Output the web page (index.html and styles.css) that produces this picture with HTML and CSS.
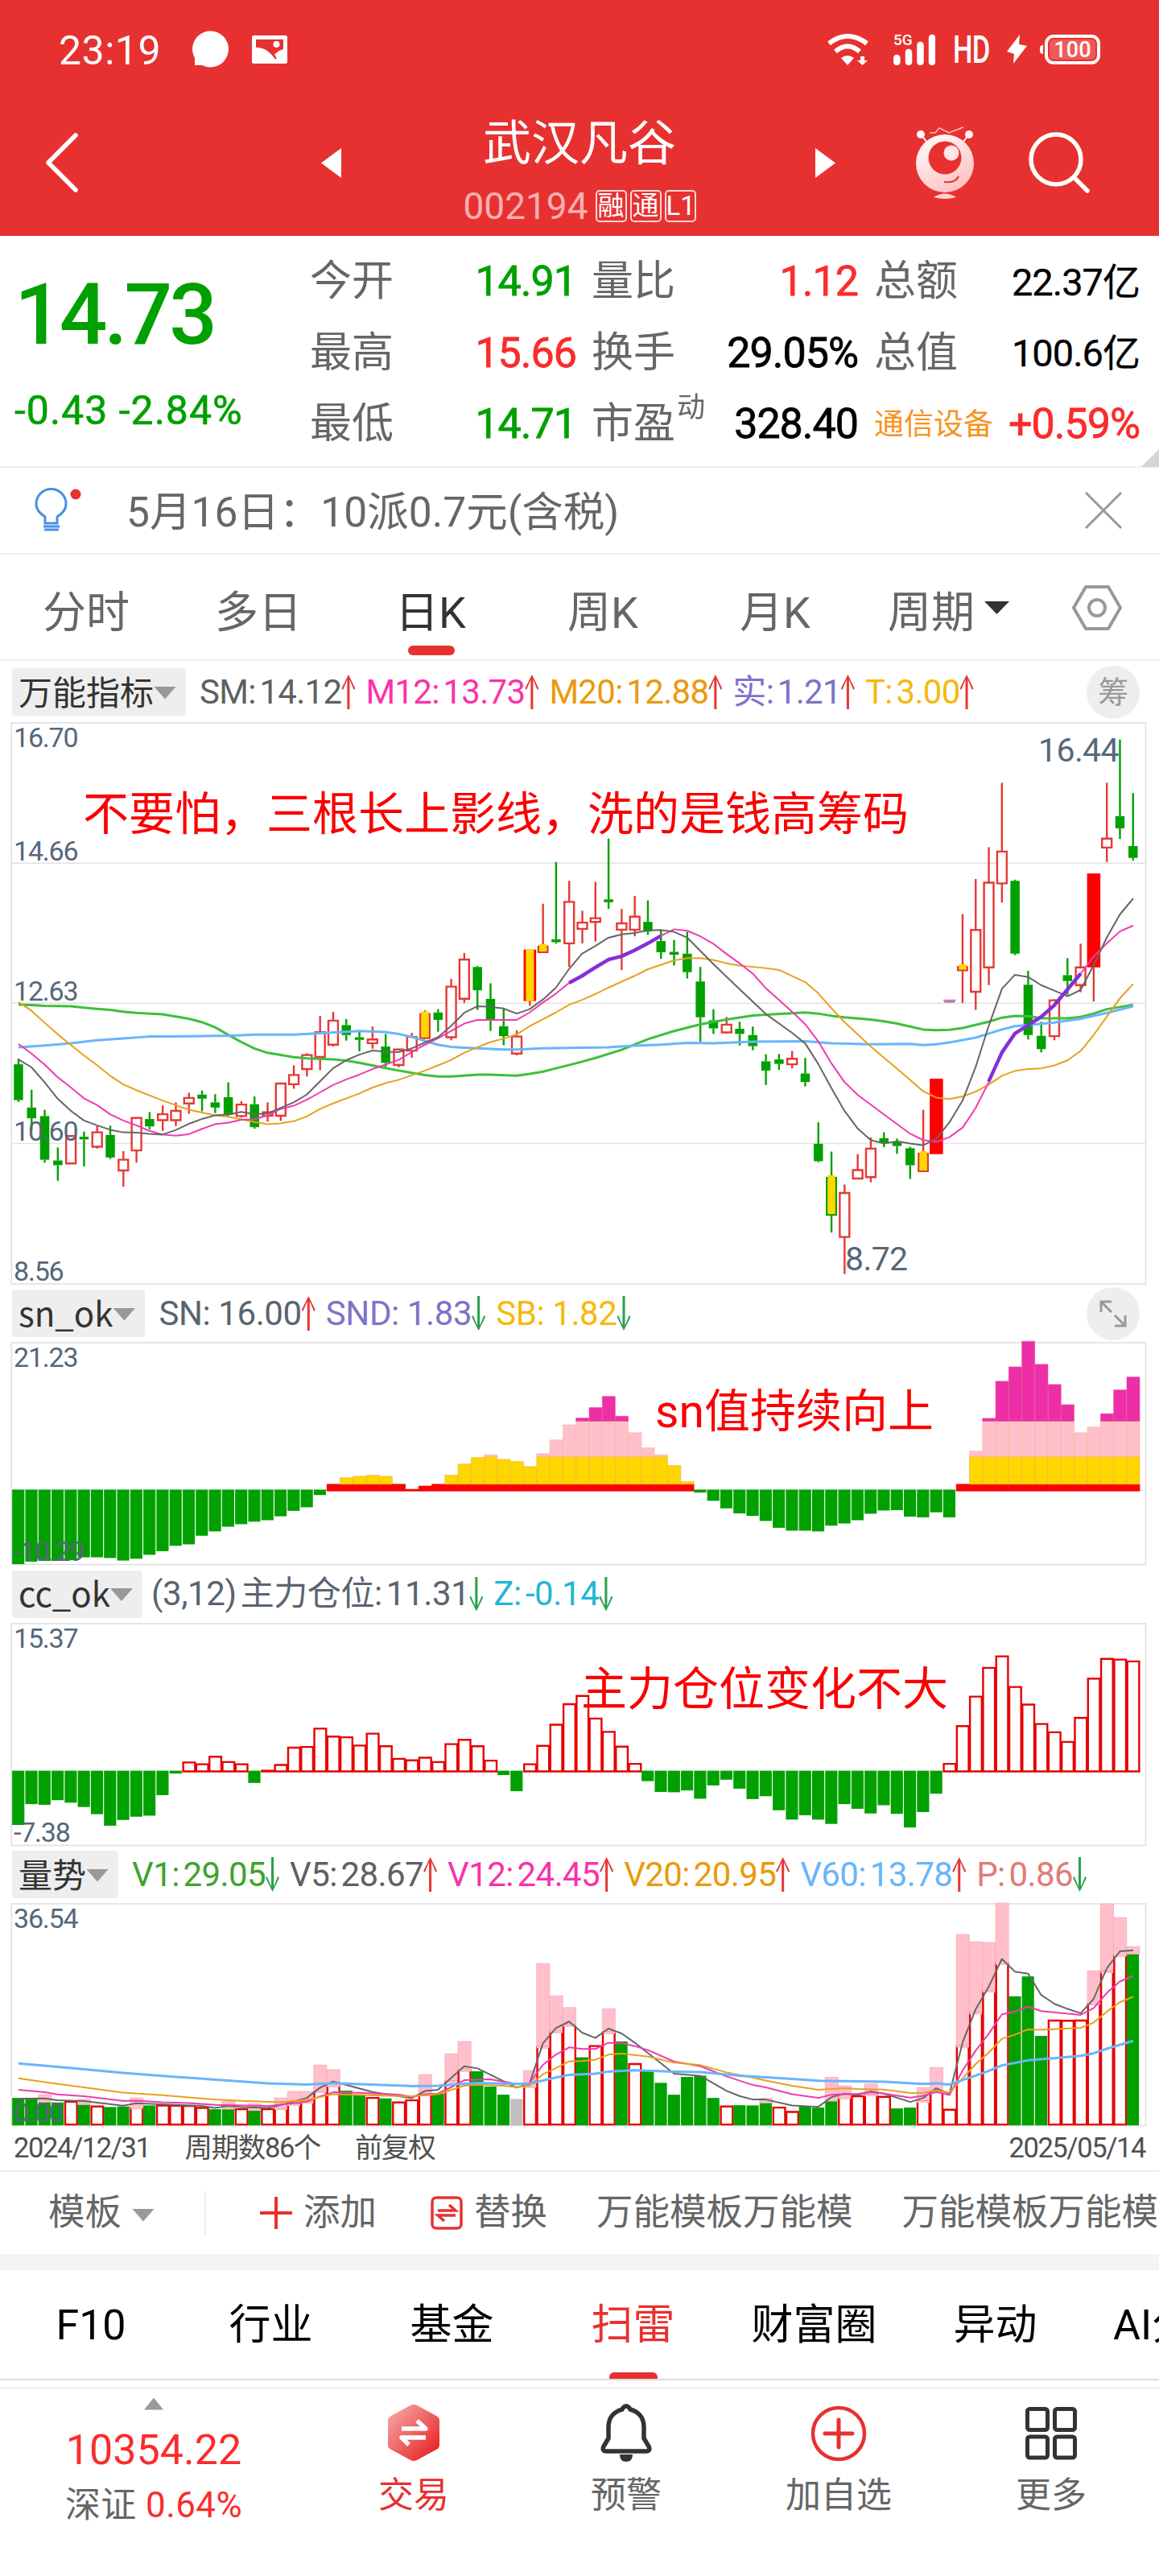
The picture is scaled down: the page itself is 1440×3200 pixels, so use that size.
FILE: index.html
```html
<!DOCTYPE html>
<html lang="zh-CN">
<head>
  <meta charset="UTF-8">
  <meta name="viewport" content="width=device-width,initial-scale=1.0">
  <title>武汉凡谷 002194</title>
  <link rel="stylesheet" href="styles.css">
</head>
<body>

  <!-- 顶部状态栏 -->
  <div class="status">
    <span class="time">23:19</span>
    <svg class="s-chat" viewBox="0 0 45 47"><circle cx="22.500" cy="23" r="22.500" fill="#fff"/><path d="M3 28v15h14z" fill="#fff"/></svg>
    <svg class="s-pic" viewBox="0 0 44 35"><rect width="44" height="35" rx="2.500" fill="#fff"/><path d="M5 5h34v12l-6 2.500-5 4 3 5-2 1C23 21 16 15 5 15z" fill="#e73131"/><circle cx="30.500" cy="11" r="4" fill="#fff"/></svg>
    <div class="status-right">
      <svg class="s-wifi" viewBox="0 0 51 39"><g fill="none" stroke="#fff" stroke-width="6"><path d="M2 12Q25 -6 49 12"/><path d="M10 22Q25 9 40 22"/></g><path d="M17 30q8-6 16 0l-8 9z" fill="#fff"/><path d="M41 28h5v5h4l-6.500 6-6.500-6h4z" fill="#fff"/></svg>
      <div class="signal">
        <span>5G</span>
        <svg viewBox="0 0 52 39"><g stroke="#fff" stroke-width="8.500" stroke-linecap="round"><path d="M4.300 30v5M19 23v12M33.500 14v21M48 5v30"/></g></svg>
      </div>
      <span class="hd">HD</span>
      <svg class="s-bolt" viewBox="0 0 25 36"><path d="M16 0L0 21l9 3-1 12 17-22-10-2z" fill="#fff"/></svg>
      <div class="battery"><span>100</span></div>
    </div>
  </div>

  <div class="header">
    <svg class="back" viewBox="0 0 40 74"><path d="M37 3L3 37l34 34" fill="none" stroke="#fff" stroke-width="5.500" stroke-linecap="round" stroke-linejoin="round"/></svg>
    <svg class="prev" viewBox="0 0 25 37"><path d="M25 0v37L0 18.500z" fill="#fff"/></svg>
    <div class="name">
      <h1>武汉凡谷</h1>
      <p><span class="code">002194</span><i>融</i><i>通</i><i>L1</i></p>
    </div>
    <svg class="next" viewBox="0 0 25 37"><path d="M0 0v37l25-18.500z" fill="#fff"/></svg>
    <svg class="robot" viewBox="0 0 72 90">
      <defs><linearGradient id="rg" x1="0" y1="0" x2=".6" y2="1"><stop offset="0" stop-color="#fff"/><stop offset="1" stop-color="#ffc2c4"/></linearGradient></defs>
      <path d="M6 10l8 10M66 10l-8 10" stroke="#fff" stroke-width="2"/>
      <path d="M17 8h7l5-6 12 6 18-7" fill="none" stroke="#ffc2c4" stroke-width="1.500"/>
      <circle cx="6" cy="10" r="5" fill="#fff"/><circle cx="66" cy="10" r="5" fill="#fff0f0"/>
      <circle cx="36" cy="46" r="36" fill="url(#rg)"/>
      <circle cx="36" cy="39" r="20.500" fill="#e73131"/>
      <circle cx="44" cy="33" r="9.500" fill="#ffe5e5"/>
      <path d="M35 69q14 2 18-7" fill="none" stroke="#e73131" stroke-width="2"/>
      <path d="M22 88q14-9 28 0-14 4-28 0z" fill="#ffd2d4"/>
    </svg>
    <svg class="search" viewBox="0 0 76 76"><circle cx="34" cy="34" r="31" fill="none" stroke="#fff" stroke-width="5.500"/><path d="M57 57l16 16" stroke="#fff" stroke-width="5.500" stroke-linecap="round"/></svg>
  </div>

  <!-- 报价 -->
  <div class="quote">
    <div class="price down">
      <strong>14.73</strong>
      <span>-0.43 -2.84%</span>
    </div>
    <dl class="col col1">
      <div><dt>今开</dt><dd class="down">14.91</dd></div>
      <div><dt>最高</dt><dd class="up">15.66</dd></div>
      <div><dt>最低</dt><dd class="down">14.71</dd></div>
    </dl>
    <dl class="col col2">
      <div><dt>量比</dt><dd class="up">1.12</dd></div>
      <div><dt>换手</dt><dd>29.05%</dd></div>
      <div><dt>市盈<sup>动</sup></dt><dd>328.40</dd></div>
    </dl>
    <dl class="col col3">
      <div><dt>总额</dt><dd class="unit">22.37亿</dd></div>
      <div><dt>总值</dt><dd class="unit">100.6亿</dd></div>
      <div><dt class="sector">通信设备</dt><dd class="up">+0.59%</dd></div>
    </dl>
  </div>

  <div class="notice">
    <svg class="bulb" viewBox="0 0 60 56"><path d="M13 45v-8C6 32 2 28 2 21a18 18 0 0 1 37 0c0 7-4 11-11 16v8zM11 49h20M12 53h18" fill="none" stroke="#4a90e2" stroke-width="3"/><circle cx="51" cy="9" r="6.500" fill="#e73131"/></svg>
    <span>5月16日：10派0.7元(含税)</span>
    <svg class="close" viewBox="0 0 46 46"><path d="M1 1l44 44M45 1L1 45" stroke="#999" stroke-width="3"/></svg>
  </div>

  <div class="periods">
    <span>分时</span><span>多日</span><span class="on">日K</span><span>周K</span><span>月K</span>
    <span class="more">周期<svg viewBox="0 0 31 16"><path d="M0 0h31L15.500 16z" fill="#333"/></svg></span>
    <svg class="setting" viewBox="0 0 62 56"><path d="M17 2h28l15 26-15 26H17L2 28z" fill="none" stroke="#999" stroke-width="4" stroke-linejoin="round"/><circle cx="31" cy="28" r="10" fill="none" stroke="#999" stroke-width="4"/></svg>
  </div>

  <!-- 主图 -->
  <div class="legend main-legend">
    <div class="tag">万能指标<b></b></div>
    <span class="c-grey a-up">SM: 14.12</span>
    <span class="c-pink a-up">M12: 13.73</span>
    <span class="c-gold a-up">M20: 12.88</span>
    <span class="c-purple a-up">实: 1.21</span>
    <span class="c-yellow a-up">T: 3.00</span>
    <div class="round">筹</div>
  </div>
  <div class="chart k-chart">
    <svg id="k" viewBox="0 40 3136 1517" preserveAspectRatio="none"></svg>
    <span class="axis t0">16.70</span>
    <span class="axis t1">14.66</span>
    <span class="axis t2">12.63</span>
    <span class="axis t3">10.60</span>
    <span class="axis t4">8.56</span>
    <span class="mark high">16.44</span>
    <span class="mark low">8.72</span>
    <span class="note note1">不要怕，三根长上影线，洗的是钱高筹码</span>
  </div>

  <div class="legend sn-legend">
    <div class="tag">sn_ok<b></b></div>
    <span class="c-slate a-up">SN: 16.00</span>
    <span class="c-purple a-down">SND: 1.83</span>
    <span class="c-yellow a-down">SB: 1.82</span>
    <div class="round"><svg viewBox="0 0 34 34"><path d="M2 15V2h13M2 2l13 13M32 19v13H19M32 32L19 19" fill="none" stroke="#999" stroke-width="3"/></svg></div>
  </div>
  <div class="chart sub-chart">
    <svg id="sn" viewBox="0 176 3136 616" preserveAspectRatio="none"></svg>
    <span class="axis top">21.23</span>
    <span class="axis foot">-10.29</span>
    <span class="note note2">sn值持续向上</span>
  </div>

  <div class="legend cc-legend">
    <div class="tag">cc_ok<b></b></div>
    <span class="c-slate a-down">(3,12) 主力仓位: 11.31</span>
    <span class="c-cyan a-down">Z: -0.14</span>
  </div>
  <div class="chart sub-chart">
    <svg id="cc" viewBox="0 957 3136 617" preserveAspectRatio="none"></svg>
    <span class="axis top">15.37</span>
    <span class="axis foot">-7.38</span>
    <span class="note note3">主力仓位变化不大</span>
  </div>

  <div class="legend vol-legend">
    <div class="tag">量势<b></b></div>
    <span class="c-green a-down">V1: 29.05</span>
    <span class="c-grey a-up">V5: 28.67</span>
    <span class="c-pink a-up">V12: 24.45</span>
    <span class="c-gold a-up">V20: 20.95</span>
    <span class="c-blue a-up">V60: 13.78</span>
    <span class="c-rose a-down">P: 0.86</span>
  </div>
  <div class="chart sub-chart">
    <svg id="vol" viewBox="0 226 3136 825" preserveAspectRatio="none"></svg>
    <span class="axis top">36.54</span>
    <span class="axis foot">0.00</span>
  </div>
  <div class="dates"><span>2024/12/31</span><span>周期数86个</span><span>前复权</span><span class="end">2025/05/14</span></div>

  <div class="tools">
    <span class="tpl">模板<b></b></span>
    <span class="add"><svg viewBox="0 0 40 40"><path d="M20 0v40M0 20h40" stroke="#e73131" stroke-width="4"/></svg>添加</span>
    <span class="swap"><svg viewBox="0 0 40 42"><rect x="2" y="2" width="36" height="38" rx="5" fill="none" stroke="#e73131" stroke-width="3.500"/><path d="M9 18h22l-8-7M31 24H9l8 7" fill="none" stroke="#e73131" stroke-width="3.500"/></svg>替换</span>
    <span class="long">万能模板万能模</span>
    <span class="long">万能模板万能模</span>
  </div>

  <div class="tabs">
    <span>F10</span><span>行业</span><span>基金</span><span class="on">扫雷</span><span>财富圈</span><span>异动</span><span>AI分析</span>
  </div>

  <div class="bottom">
    <div class="index">
      <i></i>
      <strong>10354.22</strong>
      <p>深证 <em>0.64%</em></p>
    </div>
    <div class="item red">
      <svg viewBox="0 0 72 72">
        <defs><linearGradient id="hg" x1="0" y1="0" x2="1" y2="1"><stop offset=".1" stop-color="#f5a0a0"/><stop offset=".9" stop-color="#e82525"/></linearGradient></defs>
        <path d="M32 2q4-2 8 0l24 13q4 2 4 6v30q0 4-4 6L40 70q-4 2-8 0L8 57q-4-2-4-6V21q0-4 4-6z" fill="url(#hg)"/>
        <path d="M21 31h30L40 21M51 42H21l9 9" fill="none" stroke="#fff" stroke-width="5.500" stroke-linejoin="round"/>
      </svg>
      <span>交易</span>
    </div>
    <div class="item">
      <svg viewBox="0 0 72 72"><path d="M36 3c3 0 4 2 5 4 11 3 17 11 17 22v14l6 10c2 4 0 6-3 6H11c-3 0-5-2-3-6l6-10V29C14 18 20 10 31 7c1-2 2-4 5-4z" fill="none" stroke="#333" stroke-width="5.500" stroke-linejoin="round"/><path d="M28 63h16q0 9-8 9t-8-9z" fill="#333"/></svg>
      <span>预警</span>
    </div>
    <div class="item">
      <svg viewBox="0 0 72 72"><circle cx="36" cy="37" r="32" fill="none" stroke="#e73131" stroke-width="4.500"/><path d="M36 20v34M19 37h34" stroke="#e73131" stroke-width="5" stroke-linecap="round"/></svg>
      <span>加自选</span>
    </div>
    <div class="item">
      <svg viewBox="0 0 72 72"><g fill="none" stroke="#333" stroke-width="5"><rect x="6.500" y="6.500" width="25" height="26" rx="3"/><rect x="40.500" y="6.500" width="25" height="26" rx="3"/><rect x="6.500" y="41" width="25" height="26" rx="3"/><rect x="40.500" y="41" width="25" height="26" rx="3"/></g></svg>
      <span>更多</span>
    </div>
  </div>

  <script src="chart.js"></script>
</body>
</html>
```
FILE: styles.css
```css
* {
  box-sizing: border-box;
  margin: 0;
  padding: 0;
}

body {
  width: 1440px;
  height: 3200px;
  overflow: hidden;
  background: #fff;
  color: #666;
  font-family: Roboto, "Noto Sans CJK SC", sans-serif;
  line-height: 1;
}

svg {
  display: block;
  flex-shrink: 0;
}

i, em {
  font-style: normal;
}

.up { color: #fa2c2c; }
.down { color: #00a000; }

/* ===== 状态栏 ===== */
.status {
  display: flex;
  align-items: center;
  height: 122px;
  padding: 0 73px 0 73px;
  background: #e73131;
  color: #fff;
}

.time {
  width: 166px;
  padding-top: 4px;
  font-size: 50px;
  letter-spacing: 0.5px;
}

.s-chat { width: 45px; height: 47px; }
.s-pic { width: 44px; height: 35px; margin-left: 29px; }
.s-wifi { width: 51px; height: 39px; }
.s-bolt { width: 25px; height: 36px; }

.status-right {
  display: flex;
  align-items: center;
  margin-left: auto;
}

.signal {
  position: relative;
  margin: 0 22px 0 31px;
}

.signal svg {
  width: 52px;
  height: 39px;
}

.signal span {
  position: absolute;
  left: 0;
  top: -2px;
  font-size: 19px;
  font-weight: 500;
}

.hd {
  width: 67px;
  padding-top: 2px;
  font-size: 48px;
  font-weight: 500;
  letter-spacing: -1px;
  transform: scaleX(.72);
  transform-origin: left;
}

.battery {
  position: relative;
  width: 69px;
  height: 37px;
  margin-left: 22px;
  padding: 2px;
  border: 4px solid #fff;
  border-radius: 11px;
}

.battery::before {
  content: "";
  position: absolute;
  left: -10px;
  top: 9px;
  width: 4px;
  height: 11px;
  border-radius: 4px 0 0 4px;
  background: #fff;
}

.battery span {
  display: block;
  height: 25px;
  border-radius: 5px;
  background: #ee5a5a;
  font-size: 27px;
  font-weight: 500;
  line-height: 26px;
  text-align: center;
}

/* ===== 标题 ===== */
.header {
  display: flex;
  align-items: center;
  height: 171px;
  padding: 0 86px 11px 57px;
  background: #e73131;
  color: #fff;
}

.back { width: 40px; height: 74px; }
.prev { width: 25px; height: 37px; margin-left: 302px; }
.next { width: 25px; height: 37px; }
.robot { width: 72px; height: 90px; margin-left: 100px; }
.search { width: 76px; height: 76px; margin-left: 68px; }

.name {
  width: 589px;
  padding-left: 3px;
  text-align: center;
}

.name h1 {
  margin-top: 24px;
  font-size: 60px;
  font-weight: 400;
}

.name p {
  display: flex;
  justify-content: center;
  align-items: center;
  gap: 4px;
  margin-top: 24px;
}

.code {
  margin-right: 5px;
  font-size: 46px;
  opacity: .62;
}

.name i {
  width: 39px;
  height: 40px;
  border: 2px solid #fbd6d6;
  border-radius: 5px;
  font-size: 33px;
  line-height: 36px;
}

/* ===== 报价 ===== */
.quote {
  position: relative;
  display: flex;
  height: 288px;
  padding-top: 13px;
  border-bottom: 2px solid #eee;
}

.quote::after {
  content: "";
  position: absolute;
  right: 0;
  bottom: -1px;
  border: solid transparent;
  border-width: 0 0 22px 22px;
  border-bottom-color: #d5d5d5;
}

.price {
  width: 385px;
  padding: 33px 0 0 18px;
}

.price strong {
  display: block;
  font-size: 105px;
  font-weight: 500;
  letter-spacing: -4px;
}

.price span {
  display: block;
  margin-top: 41px;
  font-size: 50px;
  font-weight: 400;
  -webkit-text-stroke: .6px currentColor;
  letter-spacing: 1px;
  white-space: nowrap;
}

.col1 { width: 331px; }
.col2 { width: 331px; margin-left: 19px; }
.col3 { width: 330px; margin-left: 20px; }

.col > div {
  display: flex;
  justify-content: space-between;
  align-items: center;
  height: 88.500px;
}

.col dt {
  position: relative;
  font-size: 52px;
}

.col dt sup {
  position: absolute;
  right: -37px;
  top: -12px;
  font-size: 35px;
}

.col dt.sector {
  font-size: 37px;
  color: #f7931e;
}

.col dd {
  font-size: 52px;
  font-weight: 400;
  -webkit-text-stroke: .8px currentColor;
  letter-spacing: -1px;
  color: #000;
}

.col dd.up { color: #fa2c2c; }
.col dd.down { color: #00a000; }

.col dd.unit {
  font-size: 47px;
  -webkit-text-stroke-width: .3px;
}

/* ===== 公告 ===== */
.notice {
  display: flex;
  align-items: center;
  height: 108px;
  padding: 0 46px 0 43px;
  border-bottom: 2px solid #eee;
  font-size: 51.500px;
}

.bulb { width: 60px; height: 56px; margin: 0 54px 3px 0; }
.notice span { padding-top: 5px; }
.close { width: 46px; height: 46px; margin: 0 0 0 auto; }

/* ===== 周期 ===== */
.periods {
  display: flex;
  height: 132px;
  border-bottom: 2px solid #eee;
  font-size: 54px;
}

.periods span {
  position: relative;
  width: 214px;
  padding-top: 46px;
  text-align: center;
}

.periods .on { color: #333; }

.periods .on::after {
  content: "";
  position: absolute;
  left: 79px;
  bottom: 5px;
  width: 58px;
  height: 12px;
  border-radius: 6px;
  background: #e73131;
}

.periods .more {
  display: flex;
  gap: 12px;
  width: 262px;
  padding-left: 33px;
}

.more svg {
  width: 31px;
  height: 16px;
  margin-top: 12px;
}

.setting {
  width: 62px;
  height: 56px;
  margin-top: 38px;
}

/* ===== 指标栏 ===== */
.legend {
  display: flex;
  align-items: center;
  height: 73px;
  padding: 0 24px 0 15px;
  font-size: 42px;
  letter-spacing: -.4px;
  word-spacing: -5px;
}

.main-legend {
  height: 77px;
  letter-spacing: -.7px;
}

.sn-legend { word-spacing: 0; }
.vol-legend { letter-spacing: -.6px; }

.tag {
  display: flex;
  align-items: center;
  height: 59px;
  margin-right: 17px;
  padding: 0 12px 4px 8px;
  border-radius: 4px;
  background: #eee;
  color: #333;
  font-family: "Noto Sans CJK SC", sans-serif;
  letter-spacing: 0;
}

.cc-legend .tag { margin-right: 11px; }

.tag b, .tpl b {
  width: 28px;
  height: 16px;
  margin-top: 6px;
  background: #999;
  clip-path: polygon(0 0, 100% 0, 50% 100%);
}

.legend span {
  display: flex;
  align-items: center;
  margin-right: 13px;
  white-space: nowrap;
}

/* 涨跌箭头 */
.legend span::after {
  content: "";
  width: 17px;
  height: 43px;
  background: currentColor;
}

.legend .a-up::after {
  background: #e53935;
  clip-path: polygon(50% 0, 100% 40%, 90% 44%, 59% 15%, 59% 100%, 41% 100%, 41% 15%, 10% 44%, 0 40%);
}

.legend .a-down::after {
  background: #2ba04c;
  clip-path: polygon(50% 100%, 100% 60%, 90% 56%, 59% 85%, 59% 0, 41% 0, 41% 85%, 10% 56%, 0 60%);
}

.c-grey { color: #606060; }
.c-slate { color: #596470; }
.c-pink { color: #fa32a8; }
.c-gold { color: #e99a0c; }
.c-purple { color: #7d73c9; }
.c-yellow { color: #f6b90e; }
.c-cyan { color: #1fb7d6; }
.c-green { color: #3fa32b; }
.c-blue { color: #69b5fb; }
.c-rose { color: #e07b78; }

.round {
  display: flex;
  justify-content: center;
  align-items: center;
  width: 66px;
  height: 66px;
  margin-left: auto;
  border-radius: 50%;
  background: #eee;
  color: #999;
  font-size: 38px;
}

.round svg { width: 34px; height: 34px; }

/* ===== 图表 ===== */
.chart {
  position: relative;
  width: 1440px;
}

.chart svg {
  width: 100%;
  height: 100%;
  overflow: visible;
}

.k-chart { height: 697px; }
.sub-chart { height: 275.500px; }

.axis, .mark, .note {
  position: absolute;
  transform: translateY(-50%);
  white-space: nowrap;
}

.axis {
  left: 17px;
  color: #54687a;
  font-size: 34px;
  letter-spacing: -1.2px;
}

.t0, .top { top: 18px; }
.t1 { top: 159px; }
.t2 { top: 333px; }
.t3 { top: 507px; }
.t4 { top: 681px; }
.foot { top: 259px; }

.mark {
  color: #54687a;
  font-size: 41px;
  letter-spacing: -.6px;
}

.high { right: 50px; top: 34px; }
.low { left: 1050px; top: 666px; }

.note {
  color: #fa0000;
  font-size: 57px;
}

.note1 { left: 103px; top: 113px; }
.note2 { left: 814px; top: 85px; }
.note3 { left: 722px; top: 81px; }

.dates {
  display: flex;
  align-items: center;
  height: 57px;
  padding: 0 17px;
  border-bottom: 2px solid #eee;
  color: #505050;
  font-size: 34.500px;
  letter-spacing: -1.4px;
}

.dates span { margin-right: 43px; }
.dates .end { margin: 0 0 0 auto; }

/* ===== 工具栏 ===== */
.tools {
  display: flex;
  align-items: center;
  height: 102px;
  padding-left: 60px;
  font-size: 45.500px;
  white-space: nowrap;
  overflow: hidden;
}

.tools span {
  display: flex;
  align-items: center;
  flex-shrink: 0;
}

.tpl {
  gap: 13px;
  width: 196px;
  height: 54px;
  margin-right: 67px;
  border-right: 2px solid #eee;
}

.add svg { width: 40px; height: 40px; margin-right: 14px; }
.swap { margin-left: 67px; }
.swap svg { width: 40px; height: 42px; margin-right: 14px; }
.long { margin-left: 61px; }

.tabs {
  display: flex;
  height: 157px;
  margin-bottom: 8px;
  padding-left: 2px;
  border-top: 20px solid #f4f4f4;
  border-bottom: 2px solid #ddd;
  color: #000;
  font-size: 52px;
  overflow: hidden;
}

.tabs span {
  position: relative;
  flex-shrink: 0;
  width: 225px;
  padding-top: 43px;
  text-align: center;
  white-space: nowrap;
}

.tabs span:first-child { width: 222px; }

.tabs span:last-child {
  padding-left: 34px;
  text-align: left;
}

.tabs .on { color: #e73131; }

.tabs .on::after {
  content: "";
  position: absolute;
  left: 83px;
  bottom: 0;
  width: 60px;
  height: 8px;
  border-radius: 6px 6px 0 0;
  background: #e73131;
}

/* ===== 底部导航 ===== */
.bottom {
  display: flex;
  height: 235px;
  border-top: 3px solid #f2f2f2;
}

.index {
  width: 382px;
  padding-top: 11px;
  text-align: center;
}

.index i {
  display: block;
  width: 24px;
  height: 15px;
  margin: 0 auto;
  background: #999;
  clip-path: polygon(50% 0, 100% 100%, 0 100%);
}

.index strong {
  display: block;
  margin-top: 24px;
  color: #fa2c2c;
  font-size: 52px;
  font-weight: 400;
}

.index p {
  margin-top: 20px;
  font-size: 44px;
  letter-spacing: .4px;
}

.index em { color: #fa2c2c; }

.item {
  width: 264px;
  padding-top: 18px;
  text-align: center;
  font-size: 44px;
}

.item svg {
  width: 72px;
  height: 72px;
  margin: 0 auto 20px;
}

.item.red { color: #e73131; }
```
FILE: chart.js
```js
// 画图坐标：每根K线间隔 35.48，第一根中心 x = 50
var STEP = 35.48, X0 = 50;
var RED = '#e53935', GREEN = '#00a000', HIST = '#e60000';

function cx(i) { return X0 + i * STEP; }

function el(svg, name, attrs) {
  var e = document.createElementNS('http://www.w3.org/2000/svg', name);
  for (var k in attrs) e.setAttribute(k, attrs[k]);
  e.setAttribute('vector-effect', 'non-scaling-stroke');
  svg.appendChild(e);
}

function box(svg, x, y, w, h, fill, stroke, sw) {
  el(svg, 'rect', { x: x, y: y, width: w, height: Math.max(h, 0), fill: fill, stroke: stroke || 'none', 'stroke-width': sw || 2.4 });
}

function line(svg, points, color, w) {
  el(svg, 'polyline', { points: points, fill: 'none', stroke: color, 'stroke-width': w, 'stroke-linejoin': 'round' });
}

function frame(svg, top, bottom, grid) {
  box(svg, 31, top, 3069, bottom - top, 'none', '#dedede', 1.5);
  grid.forEach(function (y) { line(svg, '31,' + y + ' 3100,' + y, '#e2e2e2', 1.5); });
}

// ---------- K线：[最高, 实体上, 实体下, 最低, 类型] ----------
var K = [
  [948,963,1060,1065,'g'],[1032,1080,1109,1140,'g'],[1086,1103,1221,1229,'g'],[1188,1223,1236,1278,'g'],
  [1156,1157,1231,1231,'r'],[1145,1159,1166,1239,'g'],[1130,1147,1186,1191,'r'],[1129,1154,1215,1219,'g'],
  [1198,1221,1250,1294,'r'],[1107,1108,1196,1229,'r'],[1092,1111,1131,1139,'g'],[1074,1098,1114,1143,'r'],
  [1066,1089,1114,1130,'r'],[1040,1054,1069,1097,'r'],[1034,1045,1056,1090,'g'],[1044,1066,1080,1095,'g'],
  [1012,1052,1100,1103,'g'],[1063,1072,1103,1107,'r'],[1050,1071,1133,1137,'g'],[1066,1093,1102,1118,'r'],
  [1014,1015,1102,1116,'r'],[966,992,1017,1029,'r'],[933,938,976,996,'r'],[832,876,943,979,'r'],
  [821,845,910,915,'r'],[841,857,884,899,'g'],[875,890,897,928,'g'],[861,896,906,921,'r'],
  [881,915,959,970,'g'],[921,923,965,971,'r'],[878,889,926,945,'r'],[817,822,892,895,'y'],
  [814,823,843,875,'g'],[732,753,890,898,'r'],[662,680,786,797,'r'],[697,700,763,816,'g'],
  [744,786,842,873,'g'],[812,860,887,911,'g'],[871,888,934,939,'r'],[653,653,792,805,'Y'],
  [529,640,660,660,'y'],[416,625,633,637,'g'],[467,524,636,700,'r'],[548,580,597,636,'r'],
  [470,568,578,631,'r'],[353,517,525,543,'g'],[543,582,599,708,'r'],[508,564,599,617,'r'],
  [520,578,604,613,'g'],[600,630,660,678,'g'],[627,659,667,696,'g'],[605,664,714,731,'g'],
  [700,739,836,902,'g'],[814,844,866,881,'g'],[835,856,877,880,'r'],[848,867,881,912,'g'],
  [861,884,914,925,'g'],[936,955,980,1019,'g'],[935,950,962,978,'g'],[927,948,963,974,'r'],
  [946,988,1011,1023,'g'],[1120,1178,1225,1228,'g'],[1199,1265,1370,1418,'yg'],[1288,1311,1430,1530,'r'],
  [1206,1249,1272,1272,'r'],[1161,1191,1268,1282,'r'],[1147,1163,1174,1187,'g'],[1164,1172,1184,1205,'g'],
  [1186,1190,1236,1273,'g'],[1086,1200,1252,1253,'y'],[1002,1002,1206,1206,'s'],[788,788,793,793,'d'],
  [557,695,709,797,'y'],[462,600,767,816,'r'],[376,472,701,749,'r'],[202,388,474,526,'r'],
  [464,467,664,668,'g'],[710,748,884,896,'g'],[848,886,922,931,'g'],[787,790,887,898,'r'],
  [676,722,738,775,'g'],[637,701,749,768,'r'],[447,447,701,793,'s'],[202,353,377,416,'r'],
  [85,292,325,354,'g'],[230,373,405,412,'g']
];

function drawK() {
  var s = document.getElementById('k');
  frame(s, 40, 1557, [419, 798, 1177]);
  K.forEach(function (k, i) {
    var x = cx(i), t = k[4], c = t[t.length - 1] === 'g' ? GREEN : RED;
    if (t === 'd') {
      box(s, x - 17, 788, 34, 4, '#ee6f9c');
      box(s, x - 14, 792, 28, 4, '#7a6ab0');
      return;
    }
    line(s, x + ',' + k[0] + ' ' + x + ',' + k[1], c, 2.4);
    line(s, x + ',' + k[2] + ' ' + x + ',' + k[3], c, 2.4);
    if (t === 'g') box(s, x - 12.5, k[1], 25, k[2] - k[1], GREEN);
    if (t === 'r') box(s, x - 13, k[1], 26, k[2] - k[1], '#fff', RED);
    if (t === 's') box(s, x - 18, k[1], 36, k[2] - k[1], '#ff0000');
    if (t === 'Y') {
      box(s, x - 17, k[1], 34, k[2] - k[1], '#ff0000');
      box(s, x - 11, k[1], 22, k[2] - k[1], '#ffd700');
    }
    if (t === 'y' || t === 'yg') {
      box(s, x - 12.5, k[1] + 5, 25, k[2] - k[1] - 5, '#ffd700', c);
      box(s, x - 10, k[1] - 2, 20, k[2] - k[1], '#ffd700');
    }
  });
  line(s, '50,802 85,803 121,805 192,806 227,810 262,813 298,816 333,821 369,824 440,828 511,840 546,849 582,863 617,883 653,903 688,920 724,932 795,944 830,947 901,950 937,953 972,959 1008,966 1043,973 1079,980 1114,986 1150,992 1185,996 1221,996 1292,991 1327,991 1398,994 1433,989 1469,983 1504,974 1575,956 1611,946 1682,924 1753,895 1824,873 1895,855 1966,842 2037,831 2072,829 2179,823 2214,826 2250,832 2285,836 2356,842 2392,847 2427,853 2498,869 2533,871 2569,870 2605,865 2675,848 2711,837 2746,832 2782,833 2817,838 2889,839 2924,835 2959,826 2995,814 3066,802', '#3cc03c', 3);
  line(s, '50,917 121,912 192,906 262,898 333,893 404,888 475,888 582,886 617,886 688,883 795,883 866,879 937,875 972,873 1043,876 1079,881 1114,889 1150,900 1185,910 1221,916 1256,918 1362,923 1398,923 1469,920 1575,918 1646,917 1717,913 1788,910 1860,905 1930,906 2037,902 2179,901 2250,906 2356,909 2463,908 2498,911 2533,909 2569,904 2640,891 2711,869 2746,860 2853,850 2924,840 2995,824 3066,806', '#69b5fb', 3);
  line(s, '50,795 85,818 121,851 156,882 192,911 227,939 262,965 298,994 333,1017 369,1033 440,1061 511,1086 582,1101 617,1105 653,1112 688,1119 724,1125 759,1123 795,1117 830,1104 866,1084 901,1069 972,1042 1008,1026 1043,1014 1079,1005 1150,980 1185,966 1221,951 1256,932 1292,917 1327,903 1362,894 1398,882 1433,860 1469,841 1504,823 1540,802 1575,789 1611,773 1646,756 1717,724 1753,706 1824,682 1860,676 1895,676 1930,681 1966,690 2001,696 2072,703 2108,708 2179,741 2214,771 2250,812 2285,849 2356,915 2427,975 2498,1036 2533,1053 2569,1057 2605,1050 2640,1037 2675,1018 2711,994 2746,981 2782,976 2817,974 2853,966 2889,952 2924,927 2959,884 3030,785 3066,746', '#e8a01e', 2);
  line(s, '50,908 85,934 121,964 156,998 192,1026 227,1055 262,1073 298,1098 333,1115 369,1128 404,1143 440,1153 475,1156 511,1152 546,1138 582,1125 617,1121 653,1113 688,1112 724,1101 759,1084 795,1075 830,1059 866,1039 901,1019 937,1004 972,991 1008,976 1043,964 1079,951 1114,930 1150,910 1185,893 1221,873 1256,853 1292,843 1398,843 1433,823 1469,796 1504,772 1540,743 1575,725 1646,680 1682,671 1753,636 1788,616 1824,598 1860,602 1895,617 1930,637 1966,665 2001,690 2037,718 2072,757 2108,789 2143,821 2179,855 2214,901 2250,961 2285,1011 2321,1046 2392,1099 2463,1151 2498,1168 2533,1173 2569,1160 2605,1134 2640,1081 2675,1012 2711,931 2746,880 2817,835 2853,803 2924,718 2959,672 2995,636 3030,604 3066,588', '#ee3cae', 2);
  line(s, '50,950 85,971 121,1012 156,1056 192,1089 227,1115 262,1128 298,1140 333,1147 369,1148 404,1151 440,1153 475,1141 511,1124 546,1111 582,1101 617,1099 653,1092 688,1098 724,1096 759,1081 795,1066 830,1045 866,1009 901,974 937,952 972,937 1008,926 1043,929 1079,930 1114,920 1150,904 1185,890 1221,859 1256,824 1292,806 1327,808 1362,812 1398,826 1433,814 1469,788 1504,756 1540,705 1575,664 1611,643 1646,621 1682,612 1717,608 1753,601 1788,600 1824,605 1860,621 1930,692 2001,760 2072,827 2143,878 2179,907 2214,962 2250,1028 2285,1089 2321,1137 2356,1168 2392,1177 2427,1171 2463,1177 2498,1182 2533,1165 2569,1120 2605,1060 2640,970 2675,860 2711,759 2746,721 2782,727 2817,749 2853,764 2889,779 2924,762 2959,695 2995,620 3030,558 3066,515', '#666', 2);
  line(s, '1540,743 1575,724 1611,701 1646,680 1682,671 1717,655 1753,636 1788,616', '#8430d6', 4.5);
  line(s, '2675,1010 2711,931 2746,880 2782,857 2817,835 2853,803 2889,760 2924,718', '#8430d6', 4.5);
}

// ---------- sn_ok ----------
var SN = [
  791,784,782,782,780,772,772,774,781,776,765,755,740,736,712,700,687,680,673,669,658,643,633,599,
  567,551,547,544,547,567,583,574,569,544,513,495,487,500,506,520,484,446,404,385,356,325,380,426,468,487,517,562,
  592,615,636,650,657,671,690,698,698,700,684,678,669,651,642,641,659,661,647,661,
  569,477,386,283,243,172,236,292,348,426,410,373,307,271
];

function drawSN() {
  var s = document.getElementById('sn');
  frame(s, 176, 792, [585]);
  SN.forEach(function (y, i) {
    var x = cx(i) - 17;
    if (y > 585) {
      box(s, x, 584, 33, y - 584, GREEN);
      return;
    }
    box(s, x, Math.max(y, 569), 35, 588 - Math.max(y, 569), '#ff0000', '#d90000', .6);
    if (y < 567) box(s, x, Math.max(y, 492), 35, 569 - Math.max(y, 492), '#ffd700', '#f0ae30', .6);
    if (y < 492) box(s, x, Math.max(y, 394), 35, 492 - Math.max(y, 394), '#ffc0cb', '#f7b590', .6);
    if (y < 394) box(s, x, y, 35, 394 - y, '#ee2ea6', '#d65a9c', .6);
  });
}

// ---------- cc_ok ----------
var CC = [
  1517,1459,1461,1448,1455,1467,1487,1519,1503,1494,1491,1434,1374,1343,1348,1327,1342,1348,1400,1366,
  1350,1302,1300,1249,1271,1273,1296,1263,1298,1333,1337,1330,1342,1292,1280,1298,1338,1378,1423,1348,
  1297,1238,1181,1158,1221,1258,1299,1347,1395,1425,1426,1421,1444,1407,1391,1416,1445,1437,1476,1502,
  1490,1502,1514,1459,1472,1485,1462,1486,1524,1481,1430,1347,1242,1160,1080,1048,1133,1182,1236,1259,
  1286,1219,1110,1055,1057,1062
];

function drawCC() {
  var s = document.getElementById('cc');
  frame(s, 957, 1574, []);
  CC.forEach(function (y, i) {
    var x = cx(i);
    if (y > 1367) box(s, x - 17, 1366, 33, y - 1366, GREEN);
    else box(s, x - 15.5, y, 32, 1368 - y, '#fff', HIST);
  });
}

// ---------- 量势：[类型, 柱顶, 粉色倍量顶] ----------
var V = [
  ['g',948],['g',952],['g',965,936],['g',965],['r',962],['g',974,953],['r',980],['g',982],['g',980],['r',984,948],
  ['g',976],['r',976],['r',977],['r',978],['r',985],['g',990],['g',991,960],['r',990],['g',996,970],['r',990],
  ['r',988,948],['r',974,924],['r',965,924],['r',925,826],['r',903,843],['g',921],['g',938],['r',948],['g',950],['r',965],
  ['r',957],['r',936,861],['g',932],['r',888,784],['r',846,738],['g',849],['g',906],['g',936],['n',952],['r',906,846],
  ['r',759,448],['r',702,568],['r',678,612],['g',797],['r',755],['r',705,616],['g',738],['r',822],['g',848],['g',892],
  ['g',936],['g',870],['g',865],['g',948],['r',980],['g',975],['g',976],['g',968,950],['r',984],['r',1000],
  ['g',980],['g',984],['g',961,871],['r',948,903],['r',942],['r',938,896],['r',944],['g',987],['g',984],['r',962,909],
  ['r',926,835],['r',992],['r',756,340],['r',633,367],['r',552,370],['r',448,223],['g',570],['g',496],['g',717],['r',660],
  ['r',661],['r',660],['r',598,475],['r',480,226],['r',418,277],['g',414,385]
];

function drawV() {
  var s = document.getElementById('vol');
  frame(s, 226, 1051, []);
  V.forEach(function (v, i) {
    var x = cx(i), y = v[1];
    if (v[2]) box(s, x - 17, v[2], 35, y - v[2], '#ffc0cb', '#f3a6b2', .7);
    if (v[0] === 'g') box(s, x - 17, y, 33, 1050 - y, GREEN);
    if (v[0] === 'n') box(s, x - 17, y, 33, 1050 - y, '#bfbfbf');
    if (v[0] === 'r') {
      box(s, x - 15.5, y, 32, 1047 - y, '#fff', HIST);
      if (v[2]) box(s, x - 17, y - 4, 35, 8, '#ffc0cb');
    }
  });
  line(s, '50,951 121,950 156,957 227,960 333,977 369,968 475,974 546,978 582,985 617,978 653,982 724,985 759,975 830,948 866,910 901,887 937,900 1008,926 1114,949 1150,922 1185,918 1256,830 1292,838 1398,910 1433,895 1469,745 1504,688 1540,664 1575,705 1611,725 1646,690 1682,708 1717,742 1824,858 1895,866 1966,922 2001,941 2037,954 2072,954 2143,976 2214,981 2250,945 2285,932 2321,937 2356,924 2392,932 2463,963 2498,948 2533,912 2569,933 2605,740 2640,618 2675,535 2711,431 2746,478 2782,486 2817,565 2853,598 2889,617 2924,633 2959,580 2995,465 3030,403 3066,399', '#666', 2);
  line(s, '50,918 121,927 156,935 227,942 333,959 369,958 440,964 511,967 582,974 724,978 795,968 830,962 866,942 901,927 972,929 1079,936 1114,944 1150,934 1185,932 1221,908 1256,882 1327,879 1398,896 1433,893 1469,825 1504,787 1540,760 1575,766 1611,766 1646,743 1682,744 1717,755 1753,770 1824,813 1895,830 1966,868 2037,900 2072,909 2143,934 2214,948 2250,936 2321,933 2356,927 2392,932 2463,947 2498,940 2533,926 2569,937 2605,845 2640,772 2675,710 2711,637 2746,627 2782,608 2817,625 2924,639 2959,614 2995,557 3030,515 3066,494', '#ee3cae', 2);
  line(s, '50,875 156,896 227,909 333,928 440,938 582,954 653,959 759,964 830,955 901,934 1079,941 1114,942 1185,934 1256,903 1292,899 1362,903 1398,908 1433,902 1469,860 1504,837 1540,812 1575,811 1611,806 1646,787 1682,783 1753,794 1824,817 1895,826 1966,853 2037,873 2072,883 2143,903 2214,918 2285,912 2321,915 2392,917 2463,930 2498,929 2533,920 2569,928 2605,875 2640,822 2675,780 2711,728 2746,713 2782,693 2817,695 2924,687 2959,668 2995,627 3030,592 3066,572', '#e8a01e', 2);
  line(s, '50,820 192,837 333,855 475,870 617,883 724,894 830,898 901,893 972,897 1114,904 1185,903 1292,892 1398,896 1433,895 1504,872 1540,862 1611,858 1646,850 1717,845 1824,850 1895,852 2001,865 2143,877 2214,884 2392,888 2498,896 2533,894 2569,898 2640,865 2675,848 2711,827 2782,808 2853,800 2924,791 2959,782 2995,765 3066,736', '#69b5fb', 3);
}

drawK();
drawSN();
drawCC();
drawV();
```
